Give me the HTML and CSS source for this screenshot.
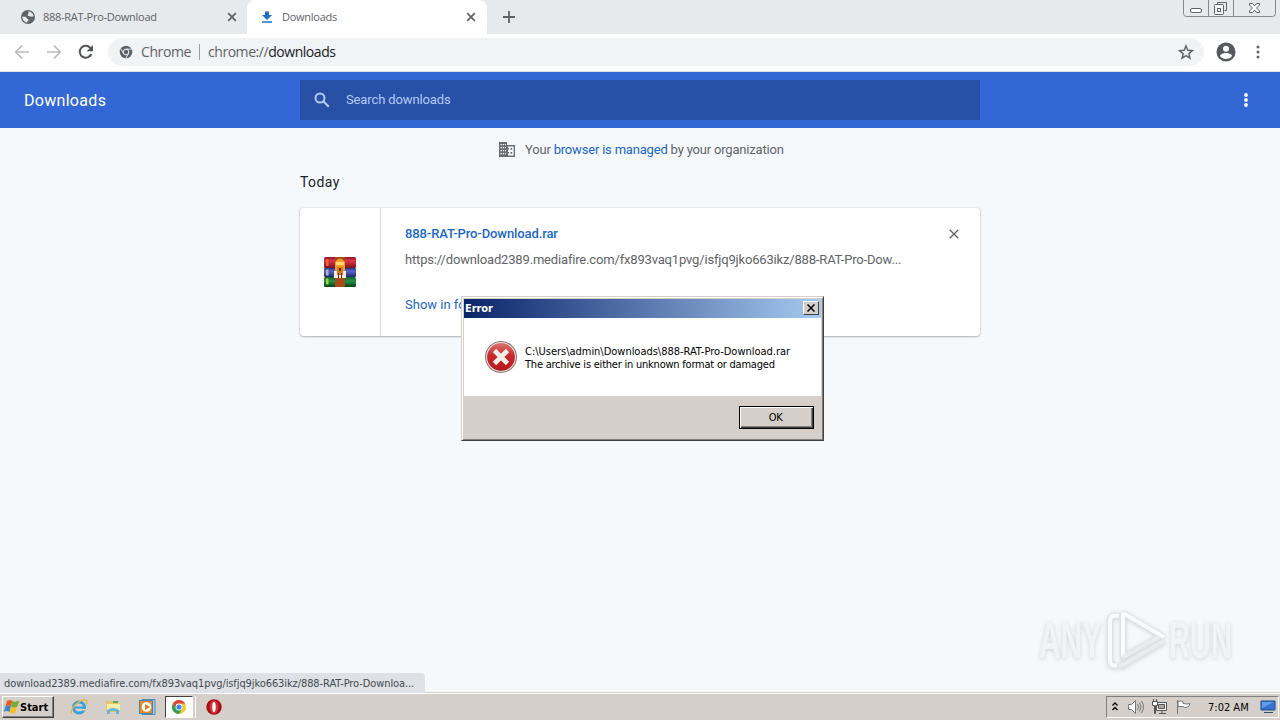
FILE: index.html
```html
<!DOCTYPE html>
<html lang="en">
<head>
  <meta charset="UTF-8">
  <title>Downloads</title>
  <link rel="stylesheet" href="styles.css">
</head>
<body>
  <div class="tabs">
    <div class="tab">
      <svg class="tab-icon" width="16" height="16" viewBox="0 0 16 16"><circle cx="8" cy="8" r="7" fill="#5f6368"/><path d="M2.3 7.500c2 .2 4 .2 4.500 1.500.3 1.300 1.500.8 1.700 2 .1 1-1.500 1.300-1.500 2.700C4 13 2.300 10.500 2.300 7.500zM8 2.500c3 0 5 1.500 5.700 4.500-.7 1-2.200.8-3.200.6C9 7.300 8 7 7.500 6 7.800 5 9 5 8.700 4 8.500 3.500 8 3.200 8 2.500z" fill="#e8eaed"/></svg>
      <span class="tab-title">888-RAT-Pro-Download</span>
      <svg class="tab-close" width="10" height="10" viewBox="0 0 10 10"><path d="M1.200 1.200l7.600 7.600M8.800 1.200L1.200 8.800" stroke="#5f6368" stroke-width="1.700"/></svg>
    </div>
    <div class="tab active">
      <svg class="tab-icon" width="16" height="16" viewBox="0 0 16 16"><path d="M6 2.500h4V6h3L8 11 3 6h3zM3 12.300h10v1.500H3z" fill="#1a6fd0"/></svg>
      <span class="tab-title">Downloads</span>
      <svg class="tab-close" width="10" height="10" viewBox="0 0 10 10"><path d="M1.200 1.200l7.600 7.600M8.800 1.200L1.200 8.800" stroke="#5f6368" stroke-width="1.700"/></svg>
    </div>
    <svg class="new-tab" width="12" height="12" viewBox="0 0 12 12"><path d="M6 0v12M0 6h12" stroke="#5f6368" stroke-width="1.800"/></svg>
    <svg class="win-buttons" width="93" height="17" viewBox="0 0 93 17" fill="none" stroke="#84878b">
      <path d="M.5 0v13.500q0 3 3 3h86q3 0 3-3V0M25.500 0v16M50.500 0v16"/>
      <g stroke="#606368"><rect x="7.500" y="8.500" width="11" height="4" rx="1.500" fill="#fff"/>
      <path d="M34.500 4.500v-2h9v8h-2"/><rect x="31.500" y="4.500" width="9" height="10" rx="1" fill="#f5f6f7"/><rect x="34.500" y="8.500" width="3" height="3"/>
      <path d="M66.500 3.500h3l2 2.500 2-2.500h3v1.500l-3 3 3 3v1.500h-3l-2-2.500-2 2.500h-3v-1.500l3-3-3-3z" fill="#fff"/></g>
    </svg>
  </div>

  <div class="toolbar">
    <svg class="nav-icon" width="16" height="16" viewBox="0 0 16 16"><path d="M15 8H2M8 1.700L1.700 8 8 14.300" fill="none" stroke="#babcbe" stroke-width="1.700"/></svg>
    <svg class="nav-icon" width="16" height="16" viewBox="0 0 16 16"><path d="M1 8h13M8 1.700L14.300 8 8 14.300" fill="none" stroke="#babcbe" stroke-width="1.700"/></svg>
    <svg class="nav-icon" width="16" height="16" viewBox="0 0 16 16"><path d="M13.300 10A6 6 0 1 1 12.300 3.800L13 4.600" fill="none" stroke="#505357" stroke-width="2"/><path d="M15 1v6.300H8.700z" fill="#505357"/></svg>
    <div class="omnibox">
      <svg width="14" height="14" viewBox="0 0 14 14"><circle cx="7" cy="7" r="6.300" fill="#5f6368"/><circle cx="7" cy="7" r="2.800" fill="#5f6368" stroke="#f1f3f4"/><path d="M7 4.100h5.700M4.500 8.500L1.600 3.500M9.500 8.500l-2.800 4.900" stroke="#f1f3f4" stroke-width=".9"/></svg>
      <span class="site">Chrome</span>
      <span class="sep"></span>
      <span class="url">chrome://<b>downloads</b></span>
      <svg class="star" width="16" height="16" viewBox="0 0 24 24"><path d="M12 3l2.700 6.400 6.800.6-5.200 4.500 1.600 6.700-5.900-3.600-5.900 3.600 1.600-6.700L2.500 10l6.800-.6z" fill="none" stroke="#5f6368" stroke-width="2.200"/></svg>
    </div>
    <svg class="avatar" width="20" height="20" viewBox="0 0 20 20"><circle cx="10" cy="10" r="9.500" fill="#55585c"/><circle cx="10" cy="6.700" r="3" fill="#fff"/><path d="M4 14c.5-4 11.500-4 12 0-2.500 4-9.500 4-12 0z" fill="#fff"/></svg>
    <svg class="menu" width="4" height="14" viewBox="0 0 4 14" fill="#5f6368"><circle cx="2" cy="2" r="1.500"/><circle cx="2" cy="7" r="1.500"/><circle cx="2" cy="12" r="1.500"/></svg>
  </div>

  <header class="header">
    <h1>Downloads</h1>
    <div class="search">
      <svg width="16" height="16" viewBox="0 0 16 16" fill="none" stroke="#b5cbf7" stroke-width="2"><circle cx="6" cy="6" r="4.500"/><path d="M9.300 9.300l5.500 5.500"/></svg>
      <span>Search downloads</span>
    </div>
    <svg class="more" width="4" height="14" viewBox="0 0 4 14" fill="#fff"><circle cx="2" cy="2" r="1.900"/><circle cx="2" cy="7" r="1.900"/><circle cx="2" cy="12" r="1.900"/></svg>
  </header>

  <main class="page">
    <div class="managed">
      <svg width="18" height="16" viewBox="0 0 18 16"><path d="M1 0h8v3h8v12H1z" fill="#6b6f74"/><path d="M2.500 2.700h5.500M2.500 5.700h5.500M2.500 8.700h5.500M2.500 11.700h5.500" stroke="#f6f9fc" stroke-width="1.200" stroke-dasharray="1.300 1"/><path d="M10 4.500h5.700v9H10z" fill="#f6f9fc"/><path d="M12.500 6h1.700v1.700h-1.700zm0 4h1.700v1.700h-1.700zM9.500 6h1.500v1.500H9.500zM9.500 10h1.500v1.500H9.500z" fill="#6b6f74"/></svg>
      <span>Your <a>browser is managed</a> by your organization</span>
    </div>
    <h2>Today</h2>
    <div class="card">
      <div class="file-icon">
        <svg width="32" height="32" viewBox="0 0 32 32">
          <defs>
            <linearGradient id="red" x2="0" y2="1"><stop offset="0" stop-color="#8e1525"/><stop offset=".35" stop-color="#e0364d"/><stop offset="1" stop-color="#76101d"/></linearGradient>
            <linearGradient id="blue" x2="0" y2="1"><stop offset="0" stop-color="#27327c"/><stop offset=".35" stop-color="#5965cb"/><stop offset="1" stop-color="#1e2769"/></linearGradient>
            <linearGradient id="green" x2="0" y2="1"><stop offset="0" stop-color="#126023"/><stop offset=".4" stop-color="#249247"/><stop offset="1" stop-color="#073f16"/></linearGradient>
          </defs>
          <rect y="1" width="32" height="11" rx="1.500" fill="url(#red)"/><rect y="12" width="32" height="9" rx="1" fill="url(#blue)"/><rect y="21" width="32" height="10" rx="1.500" fill="url(#green)"/>
          <path d="M2 3h2.500v7H2z" fill="#ef6330"/><path d="M2 13.500h2.500v6H2z" fill="#a9b2c8"/><path d="M2 22.500h2.500v6H2z" fill="#a8cf35"/>
          <path d="M11 1h10v30H11z" fill="#a64a19"/><path d="M11 6q5-7 10 0v11H11z" fill="#ee9d26"/><path d="M12 6h8v3h-8z" fill="#ffda72"/><path d="M13 11h6v9h-6z" fill="#db7b19"/><path d="M10 15h3v4h6v-4h3v7H10z" fill="#f7eee3"/><path d="M15 12h2v3h-2zM14 17h1v5h-1zM17 17h1v5h-1z" fill="#5c2c12"/>
        </svg>
      </div>
      <div class="details">
        <a class="file-name">888-RAT-Pro-Download.rar</a>
        <span class="file-url">https://download2389.mediafire.com/fx893vaq1pvg/isfjq9jko663ikz/888-RAT-Pro-Dow...</span>
        <a class="show">Show in folder</a>
      </div>
      <svg class="remove" width="10" height="10" viewBox="0 0 10 10"><path d="M.7.7l8.600 8.600M9.300.7L.7 9.300" stroke="#5f6368" stroke-width="1.300"/></svg>
    </div>
  </main>

  <div class="dialog">
    <div class="dialog-title">
      <span>Error</span>
      <div class="dialog-close"><svg width="8" height="8" viewBox="0 0 8 8"><path d="M.5.5l7 7M7.500.5l-7 7" stroke="#000" stroke-width="1.500"/></svg></div>
    </div>
    <div class="dialog-body">
      <svg width="34" height="34" viewBox="0 0 34 34">
        <defs><linearGradient id="err" x2="0" y2="1"><stop offset="0" stop-color="#dc7773"/><stop offset=".45" stop-color="#c8282b"/><stop offset="1" stop-color="#b51a20"/></linearGradient></defs>
        <circle cx="17" cy="17" r="16" fill="#8d7474"/><circle cx="17" cy="17" r="15" fill="#eee2e0"/><circle cx="17" cy="17" r="13.900" fill="url(#err)"/>
        <path d="M10.500 10.500l13 13M23.500 10.500l-13 13" stroke="#f1eee8" stroke-width="4.600"/>
      </svg>
      <p><span class="line1">C:\Users\admin\Downloads\888-RAT-Pro-Download.rar</span><br><span class="line2">The archive is either in unknown format or damaged</span></p>
    </div>
    <div class="dialog-footer"><div class="ok">OK</div></div>
  </div>

  <svg class="watermark" width="230" height="72" viewBox="0 0 230 72">
    <g class="mark-text"><text x="4" y="51" textLength="63" lengthAdjust="spacingAndGlyphs">ANY</text><text x="134" y="51" textLength="63" lengthAdjust="spacingAndGlyphs">RUN</text></g>
    <g fill="none" stroke="#dfe2e4" stroke-width="6" stroke-linejoin="round"><path d="M84 9q-9-2-9 5v39q0 7 7 5M88 6l41 24M88 6v44l36-20M84 60l45-26"/></g>
    <g fill="none" stroke="#f8fafb" stroke-width="4" stroke-linejoin="round"><path d="M84 9q-9-2-9 5v39q0 7 7 5M88 6l41 24M88 6v44"/></g>
    <path d="M88 50l36-20M84 60l45-26" stroke="#e9ecee" stroke-width="4"/>
  </svg>

  <div class="status">download2389.mediafire.com/fx893vaq1pvg/isfjq9jko663ikz/888-RAT-Pro-Downloa...</div>

  <footer class="taskbar">
    <div class="start">
      <svg width="17" height="16" viewBox="0 0 17 16"><path d="M4 2q3-2 5.500 0L8 7.500Q5 5.500 2.500 7.500z" fill="#e85a26"/><path d="M9.500 2q3 1.500 7-.5l-2.500 6.500q-3 1.500-6-.5z" fill="#70af36"/><path d="M2.500 7.500q3-2 5.500 0L6.500 13q-3-2-6 0z" fill="#3888cf"/><path d="M8 7.500q3 2 6 .5L12 14q-3 1.500-5.500-1z" fill="#f5bc23"/></svg>
      <span>Start</span>
    </div>
    <div class="quick">
      <svg width="18" height="18" viewBox="0 0 18 18"><circle cx="9" cy="9.500" r="5.500" fill="none" stroke="#3aa0dc" stroke-width="3"/><path d="M5 9.500h10" stroke="#3aa0dc" stroke-width="2"/><path d="M11 11h5v1.500h-5z" fill="#d4d0c8"/><path d="M1.500 16C-1 11 12-1 16.500 2.500c1 1 .2 3-.5 4" fill="none" stroke="#e7b83d" stroke-width="1.400"/></svg>
      <svg width="18" height="18" viewBox="0 0 18 18"><path d="M2 3h6l1 2h7v9H2z" fill="#e6c65e"/><path d="M3 6h13v6H3z" fill="#f9eda9"/><path d="M3 12q6-4 12 0v4h-3v-3H6v3H3z" fill="#68b5dc"/><path d="M9 3h5v2H9z" fill="#58aa62"/></svg>
      <svg width="18" height="18" viewBox="0 0 18 18"><path d="M4 1.500h13v15H4z" fill="#a8cbe5" stroke="#568cb5"/><path d="M1.500 2.500h13v13h-13z" fill="#ed8b22" stroke="#3b86bd"/><circle cx="8.500" cy="9" r="4.800" fill="#fff"/><path d="M7 6l5 3-5 3z" fill="#e67a15"/></svg>
      <div class="running"><svg width="16" height="16" viewBox="0 0 16 16"><circle cx="8" cy="8" r="7" fill="#f3c62b"/><path d="M1.900 4.500A7 7 0 0 1 14.100 4.500H8L5 9.500z" fill="#dc4437"/><path d="M1.900 4.500A7 7 0 0 0 8 15l3-5.300H5z" fill="#30a254"/><circle cx="8" cy="8" r="3.400" fill="#fff"/><circle cx="8" cy="8" r="2.600" fill="#4284ed"/></svg></div>
      <svg class="opera" width="16" height="16" viewBox="0 0 16 16"><circle cx="8" cy="8" r="7.700" fill="#a90d14"/><ellipse cx="8" cy="8" rx="4.500" ry="6.500" fill="#d8353a"/><ellipse cx="8" cy="8" rx="1.700" ry="5" fill="#fff"/></svg>
    </div>
    <div class="tray">
      <svg width="8" height="10" viewBox="0 0 8 10"><path d="M1.500 3.500L4 1l2.500 2.500M1.500 8L4 5.500 6.500 8" fill="none" stroke="#000" stroke-width="1.300"/></svg>
      <svg class="sound" width="18" height="16" viewBox="0 0 18 16" fill="none" stroke="#777"><path d="M1.500 5.500h3l4-4v13l-4-4h-3z" fill="#fff"/><path d="M10.500 5q2 3 0 6M12.500 3.500q3 4.500 0 9M14.500 2q4 6 0 12"/></svg>
      <svg width="18" height="16" viewBox="0 0 18 16" stroke="#555"><path d="M5.500 3.500h10v8h-10z" fill="#f4f4f4"/><path d="M7.500 5.500h6v4h-6z" fill="#aaa"/><path d="M8 14.500h7M11 12v2" fill="none"/><path d="M1.500 2.500h5v4h-2v8h-1v-8h-2zM2.500 0v2M5.500 0v2" fill="#fff"/></svg>
      <svg width="18" height="16" viewBox="0 0 18 16"><path d="M2.500 1v14M3 2.500q3-1 5 0v2q4 1 7 0-1 4-4 4-2 0-3-1H3z" fill="#fff" stroke="#777"/></svg>
      <span class="time">7:02 AM</span>
      <svg class="desk" width="16" height="14" viewBox="0 0 16 14"><path d="M1 1h14v9H1z" fill="#3274ce" stroke="#1d4c94"/><path d="M2 2h12L2 8z" fill="#649eea"/><path d="M4 12h9v1H4z" fill="#364e77"/></svg>
    </div>
  </footer>
</body>
</html>
```
FILE: styles.css
```css
body {
  margin: 0;
  width: 1280px;
  height: 720px;
  overflow: hidden;
  display: flex;
  flex-direction: column;
  position: relative;
  background: #f6f9fc;
  font-family: Roboto, sans-serif;
  font-size: 13px;
}
svg {
  display: block;
  flex: none;
}
span, a {
  white-space: nowrap;
}
.tabs {
  display: flex;
  height: 34px;
  background: #e6eaec;
}
.tab {
  box-sizing: border-box;
  display: flex;
  align-items: center;
  width: 247px;
  padding: 0 10px 1px 20px;
}
.tab.active {
  width: 240px;
  padding: 0 11px 1px 12px;
  background: #fff;
  border-radius: 8px 8px 0 0;
}
.tab-title {
  flex: 1;
  margin-left: 7px;
  font-family: "Open Sans", sans-serif;
  font-size: 11px;
  letter-spacing: -0.27px;
  color: #5f6368;
}
.new-tab {
  margin: 11px 0 0 16px;
}
.win-buttons {
  margin-left: auto;
  margin-right: 4px;
}
.toolbar {
  box-sizing: border-box;
  display: flex;
  align-items: center;
  height: 38px;
  padding: 0 20px 2px 14px;
  background: #fff;
  border-bottom: 1px solid #dfe3e8;
}
.nav-icon {
  margin-right: 16px;
}
.omnibox {
  display: flex;
  align-items: center;
  width: 1075px;
  height: 28px;
  margin-left: -2px;
  padding: 0 10px 0 11px;
  border-radius: 14px;
  background: #f1f3f4;
  font-family: "Open Sans", sans-serif;
  font-size: 14px;
  color: #5f6368;
}
.site {
  margin-left: 8px;
  letter-spacing: -0.4px;
}
.sep {
  width: 1px;
  height: 16px;
  margin: 0 8px;
  background: #9a9da0;
}
.url {
  letter-spacing: -0.45px;
}
.url b {
  font-weight: normal;
  color: #202124;
}
.star {
  margin-left: auto;
}
.avatar {
  margin-left: 12px;
}
.menu {
  margin-left: auto;
}
.header {
  box-sizing: border-box;
  display: flex;
  align-items: center;
  height: 56px;
  padding: 0 32px 0 24px;
  background: #3367d6;
  color: #fff;
}
h1 {
  width: 276px;
  margin: 0;
  font-size: 16px;
  font-weight: normal;
  letter-spacing: 0.3px;
}
.search {
  display: flex;
  align-items: center;
  box-sizing: border-box;
  width: 680px;
  height: 40px;
  padding-left: 14px;
  gap: 16px;
  background: #2950a7;
  color: #b5cbf7;
  letter-spacing: -0.12px;
}
.search span {
  padding-bottom: 2px;
}
.more {
  margin-left: auto;
}
.page {
  width: 680px;
  flex: 1;
  margin: 0 auto;
}
.managed {
  display: flex;
  align-items: center;
  height: 44px;
  padding-left: 198px;
  gap: 9px;
  color: #5f6368;
  letter-spacing: -0.19px;
}
.managed span {
  padding-bottom: 2px;
}
a {
  color: #1967c9;
}
h2 {
  margin: 1px 0 16px;
  font-size: 14px;
  line-height: 19px;
  font-weight: normal;
  letter-spacing: 0.4px;
  color: #202124;
}
.card {
  display: flex;
  height: 128px;
  border-radius: 4px;
  background: #fff;
  box-shadow: 0 1px 2px rgba(60, 64, 67, 0.35), 0 0 2px rgba(60, 64, 67, 0.2);
}
.file-icon {
  display: flex;
  align-items: center;
  justify-content: center;
  width: 80px;
  border-right: 1px solid #dadce0;
}
.details {
  display: flex;
  flex-direction: column;
  width: 544px;
  padding: 18px 0 0 24px;
  line-height: 16px;
}
.file-name {
  font-weight: 500;
  letter-spacing: -0.1px;
}
.file-url {
  margin-top: 10px;
  color: #5f6368;
  letter-spacing: -0.17px;
}
.show {
  width: 56px;
  margin-top: 29px;
  overflow: hidden;
}
.remove {
  margin-top: 21px;
}
.dialog {
  position: absolute;
  left: 461px;
  top: 296px;
  box-sizing: border-box;
  width: 363px;
  height: 145px;
  padding: 2px;
  border: 1px solid;
  border-color: #d6cfc9 #404040 #404040 #d6cfc9;
  background: #d6cfc9;
  box-shadow: inset 1px 1px #fff, inset -1px -1px #808080;
  font-family: "DejaVu Sans Condensed", "DejaVu Sans", sans-serif;
  font-size: 11px;
  color: #000;
}
.dialog-title {
  display: flex;
  align-items: center;
  justify-content: space-between;
  box-sizing: border-box;
  height: 19px;
  padding: 0 2px 1px 1px;
  background: linear-gradient(to right, #0a246a, #a6caf0);
  color: #fff;
  font-weight: bold;
  letter-spacing: -0.1px;
}
.dialog-close {
  display: flex;
  align-items: center;
  justify-content: center;
  box-sizing: border-box;
  width: 16px;
  height: 14px;
  background: #d6cfc9;
  border: 1px solid;
  border-color: #fff #404040 #404040 #fff;
}
.dialog-body {
  display: flex;
  height: 56px;
  padding: 22px 0 0 20px;
  background: #fff;
}
.dialog-body p {
  margin: 5px 0 0 7px;
  line-height: 13px;
}
.line1 {
  letter-spacing: -0.02px;
}
.line2 {
  letter-spacing: -0.22px;
}
.dialog-footer {
  display: flex;
  justify-content: flex-end;
  padding: 10px 7px 0 0;
}
.ok {
  box-sizing: border-box;
  width: 75px;
  height: 23px;
  padding-right: 2px;
  border: 1px solid #000;
  box-shadow: inset 1px 1px #fff, inset -1px -1px #404040, inset -2px -2px #808080;
  line-height: 21px;
  letter-spacing: -0.5px;
  text-align: center;
}
.watermark {
  position: absolute;
  left: 1035px;
  top: 607px;
  filter: drop-shadow(0 1px 2px rgba(0, 0, 0, 0.15));
}
.mark-text {
  font-family: "Liberation Sans", sans-serif;
  font-size: 51px;
  font-weight: bold;
  fill: #f1f3f4;
}
.status {
  position: absolute;
  left: 0;
  top: 673px;
  box-sizing: border-box;
  width: 425px;
  height: 20px;
  padding-left: 4px;
  border-radius: 0 4px 0 0;
  background: #dee1e6;
  font-family: "DejaVu Sans Condensed", "DejaVu Sans", sans-serif;
  font-size: 11px;
  line-height: 21px;
  letter-spacing: -0.09px;
  white-space: nowrap;
  color: #45494d;
}
.taskbar {
  box-sizing: border-box;
  display: flex;
  align-items: center;
  height: 28px;
  padding: 1px 1px 0 2px;
  border-top: 1px solid #d6cfc9;
  background: #d6cfc9;
  box-shadow: inset 0 1px #fff;
  font-family: "DejaVu Sans Condensed", "DejaVu Sans", sans-serif;
  font-size: 11px;
}
.start {
  display: flex;
  align-items: center;
  box-sizing: border-box;
  width: 52px;
  height: 22px;
  border: 1px solid;
  border-color: #fff #404040 #404040 #fff;
  box-shadow: inset -1px -1px #808080;
  font-weight: bold;
}
.quick {
  display: flex;
  align-items: center;
  gap: 16px;
  margin-left: 16px;
}
.running {
  display: flex;
  align-items: center;
  justify-content: center;
  box-sizing: border-box;
  width: 28px;
  height: 22px;
  margin-left: -7px;
  border: 1px solid;
  border-color: #404040 #fff #fff #404040;
  background: #fff;
  box-shadow: 2px 0 #d6cfc9, 3px 0 #fff;
}
.opera {
  margin-left: -3px;
}
.tray {
  display: flex;
  align-items: center;
  box-sizing: border-box;
  width: 173px;
  height: 22px;
  margin-left: auto;
  padding-left: 4px;
  border: 1px solid;
  border-color: #808080 #fff #fff #808080;
  gap: 6px;
}
.sound {
  margin-left: 2px;
}
.time {
  margin-left: 9px;
}
.desk {
  margin-left: 5px;
}
```
